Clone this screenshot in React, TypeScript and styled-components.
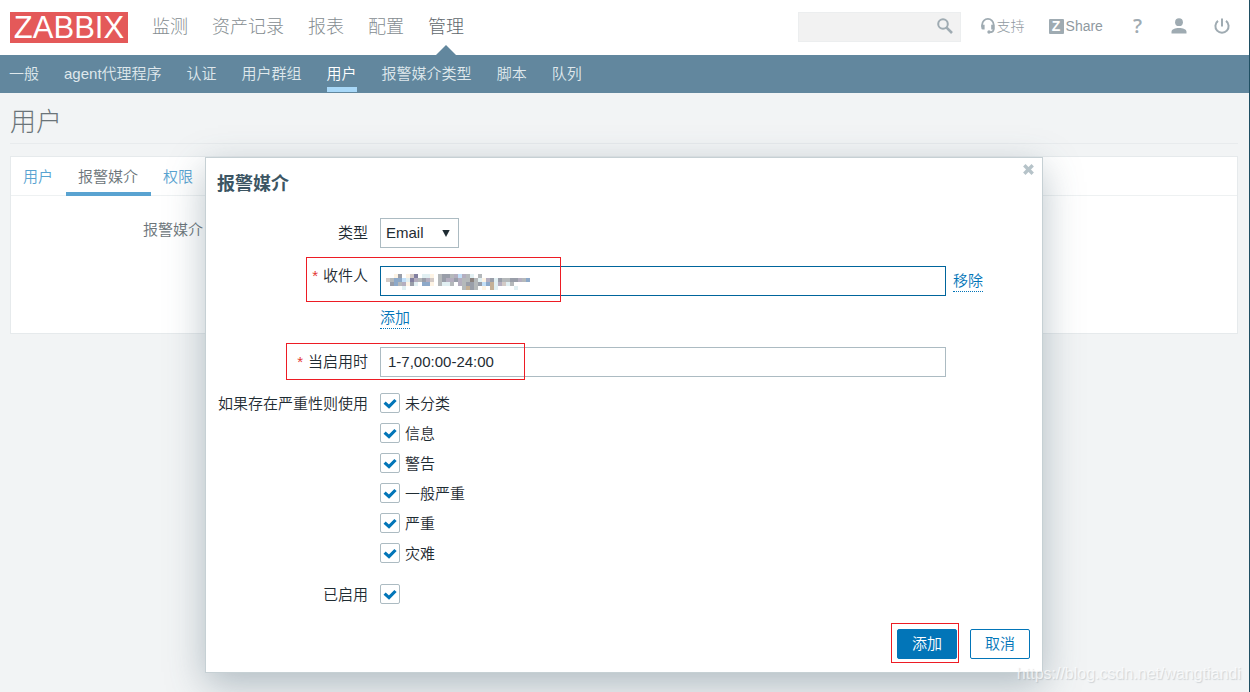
import React, { useState } from "react";
import styled, { createGlobalStyle, css } from "styled-components";

const GlobalStyle = createGlobalStyle`
  *, *::before, *::after { box-sizing: border-box; }
  html { background: #f2f4f5; }
  body {
    margin: 0;
    min-height: 100vh;
    border-right: 1px solid #1f4f63;
    font-family: "Liberation Sans", "Noto Sans CJK SC", sans-serif;
    font-size: 15px;
    font-weight: 350;
    line-height: 20px;
    color: #1f2c33;
  }
  h1, h2, ul { margin: 0; padding: 0; }
  ul { list-style: none; }
  a { text-decoration: none; }
  button, input, select { font: inherit; color: inherit; }
`;

/* ---------- page header ---------- */

const TopBar = styled.header`
  display: flex;
  align-items: center;
  height: 55px;
  padding: 0 19px 1px 10px;
  background: #fff;
`;

const Logo = styled.a`
  width: 118px;
  height: 31px;
  background: #e45959;
  color: #fff;
  font-size: 31px;
  line-height: 31px;
  text-align: center;
`;

const MainNav = styled.nav`
  display: flex;
  align-self: flex-start;
  gap: 24px;
  height: 55px;
  margin-left: 24px;
`;

const MainLink = styled.a<{ $active?: boolean }>`
  position: relative;
  font-size: 18px;
  font-weight: 300;
  line-height: 55px;
  color: ${(p) => (p.$active ? "#5f686d" : "#858d91")};
  ${(p) =>
    p.$active &&
    css`
      &::after {
        content: "";
        position: absolute;
        left: 50%;
        bottom: 0;
        margin-left: -10px;
        border: 10px solid transparent;
        border-top-width: 0;
        border-bottom-color: #62879e;
      }
    `}
`;

const SearchForm = styled.form`
  display: flex;
  align-items: center;
  width: 163px;
  height: 30px;
  margin: 0 20px 0 auto;
  padding-right: 7px;
  background: #f2f2f2;
  border: 1px solid #eceeef;
`;

const SearchInput = styled.input`
  flex: 1;
  min-width: 0;
  height: 28px;
  border: 0;
  background: transparent;
  outline: none;
`;

const IconButton = styled.button`
  display: flex;
  padding: 0 0 2px;
  border: 0;
  background: none;
  color: #9fabb2;
`;

const Tools = styled.div`
  display: flex;
  align-items: center;
  height: 52px;
  align-self: flex-start;
  color: #9fabb2;
`;

const ToolLink = styled.a<{ $gap?: number }>`
  display: flex;
  align-items: center;
  gap: 2px;
  margin-left: ${(p) => p.$gap ?? 0}px;
  font-size: 14px;
  font-weight: 300;
  color: #8f999f;
  svg { color: #9fabb2; }
`;

const ShareBadge = styled.span`
  width: 15px;
  height: 15px;
  border-radius: 1px;
  background: #9fabb2;
  color: #fff;
  font-size: 14px;
  font-weight: 700;
  line-height: 15px;
  text-align: center;
`;

const HelpMark = styled.span`
  font-size: 20px;
  font-weight: 600;
  font-family: "Open Sans", sans-serif;
  color: #9fabb2;
`;

/* ---------- sub navigation ---------- */

const SubNav = styled.nav`
  display: flex;
  gap: 25px;
  height: 38px;
  padding: 0 9px;
  background: #62879e;
`;

const SubLink = styled.a<{ $active?: boolean }>`
  height: 37px;
  line-height: 38px;
  color: ${(p) => (p.$active ? "#fff" : "#dfe8ec")};
  border-bottom: 5px solid ${(p) => (p.$active ? "#a8d8f8" : "transparent")};
`;

/* ---------- page body ---------- */

const Page = styled.main`
  padding: 0 11px 0 10px;
`;

const PageTitle = styled.h1`
  height: 51px;
  border-bottom: 1px solid #e8ebed;
  color: #6b7479;
  font-size: 26px;
  font-weight: 300;
  line-height: 58px;
`;

const Panel = styled.section`
  height: 178px;
  margin-top: 12px;
  background: #fff;
  border: 1px solid #e6eaec;
`;

const Tabs = styled.nav`
  display: flex;
  height: 39px;
  border-bottom: 1px solid #eef1f2;
`;

const Tab = styled.a<{ $active?: boolean }>`
  height: 39px;
  padding: 0 13px 0 12px;
  line-height: 40px;
  color: ${(p) => (p.$active ? "#6b7479" : "#59a3d1")};
  border-bottom: 4px solid ${(p) => (p.$active ? "#59a3d1" : "transparent")};
`;

const PanelLabel = styled.div`
  width: 192px;
  margin-top: 24px;
  color: #6b7479;
  text-align: right;
`;

/* ---------- dialog ---------- */

const Overlay = styled.div`
  position: absolute;
  inset: 0;
  display: flex;
  align-items: flex-start;
  justify-content: center;
  min-height: 100vh;
  padding: 157px 2px 0 0;
  overflow: hidden;
`;

const Dialog = styled.section`
  position: relative;
  width: 838px;
  max-width: 100%;
  padding: 14px 12px 13px 11px;
  background: #fff;
  border: 1px solid #c6d0d4;
  box-shadow: 0 12px 36px rgba(62, 90, 104, 0.36);
`;

const DialogTitle = styled.h2`
  font-size: 18px;
  line-height: 24px;
  color: #3c5563;
`;

const CloseButton = styled.button`
  position: absolute;
  top: 6px;
  right: 8px;
  display: flex;
  padding: 0;
  border: 0;
  background: none;
  color: #b6c3c9;
`;

const Row = styled.div<{ $top: number }>`
  position: relative;
  display: grid;
  grid-template-columns: 151px minmax(0, 1fr);
  column-gap: 12px;
  margin-top: ${(p) => p.$top}px;
`;

const FieldLabel = styled.label<{ $line?: number; $required?: boolean }>`
  height: 20px;
  line-height: ${(p) => p.$line ?? 22}px;
  text-align: right;
  ${(p) =>
    p.$required &&
    css`
      &::before {
        content: "*";
        margin-right: 5px;
        color: #e33734;
      }
    `}
`;

const Field = styled.div`
  display: flex;
  align-items: center;
  gap: 7px;
`;

const SelectBox = styled.span`
  display: inline-grid;
  align-items: center;
  width: 79px;
  > * { grid-area: 1 / 1; }
  svg { justify-self: end; margin-right: 9px; pointer-events: none; }
`;

const Select = styled.select`
  appearance: none;
  width: 100%;
  height: 30px;
  padding: 0 20px 0 5px;
  border: 1px solid #acbbc2;
  border-radius: 0;
  background: #fff;
`;

const InputBox = styled.span`
  display: inline-grid;
  align-items: center;
  width: 566px;
  > * { grid-area: 1 / 1; }
  svg { margin: 2px 0 0 6px; pointer-events: none; }
`;

const TextInput = styled.input<{ $focused?: boolean }>`
  width: 100%;
  height: 30px;
  padding: 0 7px 2px;
  border: 1px solid ${(p) => (p.$focused ? "#00659c" : "#acbbc2")};
  outline: none;
  background: #fff;
`;

const ActionLink = styled.a`
  justify-self: start;
  color: #0275b8;
  border-bottom: 1px dotted #0275b8;
`;

const RecipientField = styled.div`
  display: grid;
  row-gap: 12px;
`;

const CheckList = styled.ul`
  display: grid;
  row-gap: 10px;
`;

const CheckLabel = styled.label`
  display: flex;
  align-items: flex-start;
  gap: 5px;
  height: 20px;
  line-height: 22px;
`;

const CheckBox = styled.span`
  display: inline-grid;
  place-items: center;
  width: 20px;
  height: 20px;
  > * { grid-area: 1 / 1; }
  svg { visibility: hidden; pointer-events: none; }
  input:checked + svg { visibility: visible; }
`;

const CheckInput = styled.input`
  appearance: none;
  width: 20px;
  height: 20px;
  margin: 0;
  border: 1px solid #acbbc2;
  border-radius: 2px;
  background: #fff;
`;

const Footer = styled.footer`
  display: flex;
  justify-content: flex-end;
  gap: 13px;
  margin-top: 25px;
`;

const Anchor = styled.div`
  position: relative;
`;

const Button = styled.button<{ $primary?: boolean }>`
  width: 60px;
  height: 30px;
  padding: 0;
  border: 1px solid #0275b8;
  border-radius: 2px;
  background: ${(p) => (p.$primary ? "#0275b8" : "#fff")};
  color: ${(p) => (p.$primary ? "#fff" : "#0275b8")};
`;

/* Red frames that call out the fields to fill in. */
const Callout = styled.span<{ $x: number; $y: number; $w: number; $h: number }>`
  position: absolute;
  left: ${(p) => p.$x}px;
  top: ${(p) => p.$y}px;
  width: ${(p) => p.$w}px;
  height: ${(p) => p.$h}px;
  border: 1px solid #ed1c24;
  pointer-events: none;
`;

const Watermark = styled.span`
  position: absolute;
  right: 9px;
  bottom: 8px;
  font-size: 16px;
  color: rgba(255, 255, 255, 0.7);
  text-shadow: 1px 1px 1px rgba(120, 130, 135, 0.28);
`;

/* ---------- drawings ---------- */

const SearchIcon = () => (
  <svg width="16" height="16" viewBox="0 0 16 16" fill="none" stroke="currentColor" strokeWidth="2">
    <circle cx="6" cy="6" r="4.8" />
    <path d="M9.6 9.6 L15 15" strokeWidth="2.6" />
  </svg>
);

const HeadsetIcon = () => (
  <svg width="14" height="16" viewBox="0 0 14 16" fill="none" stroke="currentColor" strokeWidth="1.8">
    <path d="M1.2 9V6.6a5.6 5.6 0 0 1 11.4 0v4.6c0 2-1.6 3-4.2 3" />
    <path d="M.3 6.800h3.300v4.800H2A1.700 1.700 0 0 1 .3 9.900zM10.200 6.800h3.300v4.800h-3.300z" fill="currentColor" stroke="none" />
    <circle cx="8" cy="14" r="1.7" fill="currentColor" stroke="none" />
  </svg>
);

const UserIcon = () => (
  <svg width="16" height="16" viewBox="0 0 16 16" fill="currentColor">
    <circle cx="8" cy="4.200" r="3.900" />
    <path d="M.5 15.500v-1.700C.5 11.200 4.200 10 8 10s7.500 1.200 7.500 3.800v1.700z" />
  </svg>
);

const PowerIcon = () => (
  <svg width="16" height="16" viewBox="0 0 16 16" fill="none" stroke="currentColor" strokeWidth="2">
    <path d="M8 .5v8M4 2.900a6.600 6.600 0 1 0 8 0" />
  </svg>
);

const CloseIcon = () => (
  <svg width="11" height="11" viewBox="0 0 11 11" stroke="currentColor" strokeWidth="3.400">
    <path d="M1.300 1.300l8.400 8.400M9.700 1.300l-8.400 8.400" />
  </svg>
);

const CheckIcon = () => (
  <svg width="14" height="12" viewBox="0 0 14 12" fill="none" stroke="#0275b8" strokeWidth="3.200">
    <path d="M1.600 5.600l4.400 4L12.500 3" />
  </svg>
);

const ArrowIcon = () => (
  <svg width="8" height="8" viewBox="0 0 8 8" fill="#1f2c33">
    <path d="M.3 1h7.400L4 8z" />
  </svg>
);

/* Pixelated stand-in for the hidden address: one letter per 4px cell. */
const SHADES: Record<string, string> = {
  a: "#fdf3e4",
  b: "#e1eff2",
  c: "#d3cac6",
  d: "#b5b9bb",
  e: "#999ea9",
  f: "#8b827f",
  g: "#8da9c9",
  h: "#c2dff8",
  i: "#8280a0",
  j: "#b4aebf",
  k: "#c4b096",
};

const MOSAIC = [
  "..ae.aci.bba.deedjhjdb.d............",
  "cdgghbijdejc.dejjejddfdbajebeddeejdg",
  ".egdjaeb.gga.dbbd.jdeedehgkbjcbd....",
  "....b..............dked.a.kb....b...",
];

const MaskedAddress = () => (
  <svg width="144" height="16" viewBox="0 0 144 16" shapeRendering="crispEdges">
    {MOSAIC.flatMap((line, y) =>
      line.split("").map((cell, x) =>
        SHADES[cell] ? (
          <rect key={`${x}-${y}`} x={x * 4} y={y * 4} width="4" height="4" fill={SHADES[cell]} />
        ) : null
      )
    )}
  </svg>
);

/* ---------- content ---------- */

const MAIN_ITEMS = ["监测", "资产记录", "报表", "配置", "管理"];
const SUB_ITEMS = ["一般", "agent代理程序", "认证", "用户群组", "用户", "报警媒介类型", "脚本", "队列"];
const TAB_ITEMS = ["用户", "报警媒介", "权限"];
const SEVERITIES = ["未分类", "信息", "警告", "一般严重", "严重", "灾难"];

const Tick = ({ id }: { id?: string }) => (
  <CheckBox>
    <CheckInput id={id} type="checkbox" defaultChecked />
    <CheckIcon />
  </CheckBox>
);

export default function App() {
  const [period, setPeriod] = useState("1-7,00:00-24:00");

  return (
    <>
      <GlobalStyle />
      <TopBar>
        <Logo href="#">ZABBIX</Logo>
        <MainNav>
          {MAIN_ITEMS.map((item) => (
            <MainLink key={item} href="#" $active={item === "管理"}>
              {item}
            </MainLink>
          ))}
        </MainNav>
        <SearchForm>
          <SearchInput type="text" aria-label="搜索" />
          <IconButton type="button" aria-label="搜索">
            <SearchIcon />
          </IconButton>
        </SearchForm>
        <Tools>
          <ToolLink href="#">
            <HeadsetIcon />
            支持
          </ToolLink>
          <ToolLink href="#" $gap={24}>
            <ShareBadge>Z</ShareBadge>
            Share
          </ToolLink>
          <ToolLink href="#" $gap={30}>
            <HelpMark>?</HelpMark>
          </ToolLink>
          <ToolLink href="#" $gap={29} aria-label="用户">
            <UserIcon />
          </ToolLink>
          <ToolLink href="#" $gap={27} aria-label="退出">
            <PowerIcon />
          </ToolLink>
        </Tools>
      </TopBar>

      <SubNav>
        {SUB_ITEMS.map((item) => (
          <SubLink key={item} href="#" $active={item === "用户"}>
            {item}
          </SubLink>
        ))}
      </SubNav>

      <Page>
        <PageTitle>用户</PageTitle>
        <Panel>
          <Tabs>
            {TAB_ITEMS.map((item) => (
              <Tab key={item} href="#" $active={item === "报警媒介"}>
                {item}
              </Tab>
            ))}
          </Tabs>
          <PanelLabel>报警媒介</PanelLabel>
        </Panel>
      </Page>

      <Overlay>
        <Dialog role="dialog" aria-labelledby="dialog-title">
          <DialogTitle id="dialog-title">报警媒介</DialogTitle>
          <CloseButton type="button" aria-label="关闭">
            <CloseIcon />
          </CloseButton>

          <Row $top={22}>
            <FieldLabel htmlFor="type" $line={30}>类型</FieldLabel>
            <Field>
              <SelectBox>
                <Select id="type" defaultValue="Email">
                  <option>Email</option>
                </Select>
                <ArrowIcon />
              </SelectBox>
            </Field>
          </Row>

          <Row $top={18}>
            <FieldLabel htmlFor="recipient" $line={20} $required>收件人</FieldLabel>
            <RecipientField>
              <Field>
                <InputBox>
                  <TextInput id="recipient" type="text" $focused />
                  <MaskedAddress />
                </InputBox>
                <ActionLink href="#">移除</ActionLink>
              </Field>
              <ActionLink href="#">添加</ActionLink>
            </RecipientField>
            <Callout $x={89} $y={-9} $w={255} $h={45} />
          </Row>

          <Row $top={18}>
            <FieldLabel htmlFor="period" $line={30} $required>当启用时</FieldLabel>
            <Field>
              <InputBox>
                <TextInput
                  id="period"
                  type="text"
                  value={period}
                  onChange={(e) => setPeriod(e.target.value)}
                />
              </InputBox>
            </Field>
            <Callout $x={69} $y={-4} $w={239} $h={37} />
          </Row>

          <Row $top={16} role="group" aria-labelledby="severity-label">
            <FieldLabel as="span" id="severity-label">如果存在严重性则使用</FieldLabel>
            <CheckList>
              {SEVERITIES.map((name) => (
                <li key={name}>
                  <CheckLabel>
                    <Tick />
                    {name}
                  </CheckLabel>
                </li>
              ))}
            </CheckList>
          </Row>

          <Row $top={21}>
            <FieldLabel htmlFor="enabled">已启用</FieldLabel>
            <Tick id="enabled" />
          </Row>

          <Footer>
            <Anchor>
              <Button type="button" $primary>添加</Button>
              <Callout $x={-6} $y={-6} $w={68} $h={40} />
            </Anchor>
            <Button type="button">取消</Button>
          </Footer>
        </Dialog>
        <Watermark>https://blog.csdn.net/wangtiandi</Watermark>
      </Overlay>
    </>
  );
}
